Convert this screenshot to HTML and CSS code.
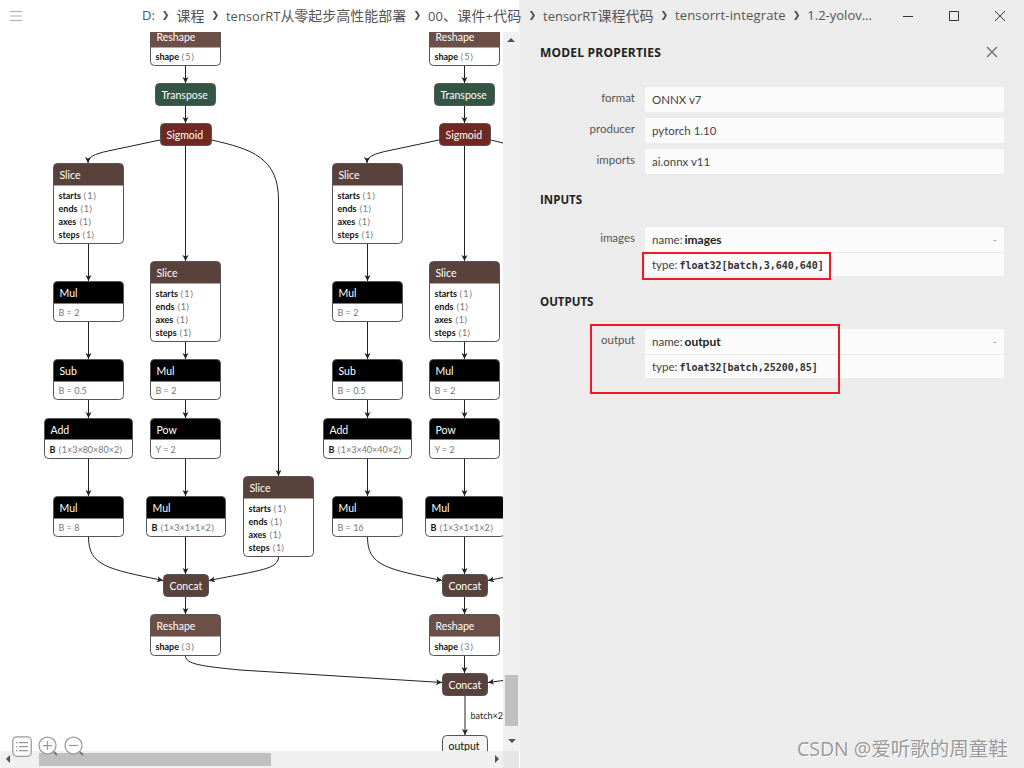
FILE: index.html
```html
<!DOCTYPE html>
<html lang="zh-CN">
<head>
    <meta charset="UTF-8">
    <meta name="viewport" content="width=device-width, initial-scale=1.0">
    <title>Netron - model properties</title>
    <link rel="stylesheet" href="styles.css">
</head>
<body>
    <header class="titlebar">
        <svg class="menu-icon" width="14" height="12" viewBox="0 0 14 12"><path d="M1 1.5h12M1 6h12M1 10.5h12"/></svg>
        <nav class="crumbs">
            <span>D:</span><i>❯</i>
            <span class="cjk">课程</span><i>❯</i>
            <span>tensorRT<span class="cjk">从零起步高性能部署</span></span><i>❯</i>
            <span class="wide">00<span class="cjk">、课件</span>+<span class="cjk">代码</span></span><i>❯</i>
            <span>tensorRT<span class="cjk">课程代码</span></span><i>❯</i>
            <span class="wide">tensorrt-integrate</span><i>❯</i>
            <span>1.2-yolov...</span>
        </nav>
        <div class="win-controls">
            <svg width="12" height="12" viewBox="0 0 12 12"><path d="M1 6.5h10"/></svg>
            <svg width="12" height="12" viewBox="0 0 12 12"><path d="M1.5 1.5h9v9h-9z"/></svg>
            <svg width="12" height="12" viewBox="0 0 12 12"><path d="M1 1l10 10M11 1L1 11"/></svg>
        </div>
    </header>

    <div class="workspace">
        <section class="viewer">
            <div class="viewer-top">
                <div class="canvas">
                    <!-- viewBox starts at y=32 so the numbers below are window coordinates -->
                    <svg class="graph" width="503" height="719" viewBox="0 32 503 719">
                        <defs>
                            <marker id="arrow" markerWidth="7" markerHeight="7" refX="6" refY="3.5" orient="auto" markerUnits="userSpaceOnUse">
                                <path d="M0 0.5L6 3.5L0 6.5L1.5 3.5z" fill="#222"/>
                            </marker>
                            <g id="edges">
                                <path d="M185.5 66V83"/>
                                <path d="M185.5 106V123"/>
                                <path d="M160 140L108 151C94 154 88 157 88 163"/>
                                <path d="M185.5 146V261"/>
                                <path d="M211.5 140C252 149 278.5 158 278.5 200V476"/>
                                <path d="M88.5 244V281"/>
                                <path d="M185.5 342V359"/>
                                <path d="M88.5 322V359"/>
                                <path d="M88.5 400V418"/>
                                <path d="M88.5 459V496"/>
                                <path d="M185.5 400V418"/>
                                <path d="M185.5 459V496"/>
                                <path d="M88.5 537C88.5 566 108 569 163 580.5"/>
                                <path d="M185.5 537V574"/>
                                <path d="M278.5 557C278 569 262 570 209 580.5"/>
                                <path d="M185.5 597V614"/>
                            </g>
                        </defs>

                        <g class="edges">
                            <use href="#edges"/>
                            <use href="#edges" x="279"/>
                            <path d="M185.5 656C186 664 200 666 240 670L442 682.5"/>
                            <path d="M503 680.5L488 682.5"/>
                            <path d="M464.5 656V673"/>
                            <path d="M465 696V735"/>
                        </g>
                        <text class="edge-label" x="470.5" y="719">batch×2</text>

                        <!-- left column -->
                        <g transform="translate(150.5,25.5)">
                            <path class="h-shape" d="M0 22V4a4 4 0 0 1 4-4h62a4 4 0 0 1 4 4v18z"/>
                            <rect class="frame" width="70" height="40" rx="4"/>
                            <text class="op" x="6" y="15">Reshape</text>
                            <text class="attr" x="5" y="34.5"><tspan class="bold">shape</tspan> <tspan class="val">⟨5⟩</tspan></text>
                        </g>
                        <g transform="translate(155.5,83.5)">
                            <rect class="h-layer frame" width="60" height="22" rx="4"/>
                            <text class="op" x="6" y="15.5">Transpose</text>
                        </g>
                        <g transform="translate(160.5,123.5)">
                            <rect class="h-act frame" width="51" height="22" rx="4"/>
                            <text class="op" x="6" y="15.5">Sigmoid</text>
                        </g>
                        <g transform="translate(53.5,163.5)">
                            <path class="h-tensor" d="M0 22V4a4 4 0 0 1 4-4h62a4 4 0 0 1 4 4v18z"/>
                            <rect class="frame" width="70" height="80" rx="4"/>
                            <text class="op" x="6" y="15.5">Slice</text>
                            <text class="attr" x="5" y="35.5"><tspan class="bold">starts</tspan> <tspan class="val">⟨1⟩</tspan></text>
                            <text class="attr" x="5" y="48.5"><tspan class="bold">ends</tspan> <tspan class="val">⟨1⟩</tspan></text>
                            <text class="attr" x="5" y="61.5"><tspan class="bold">axes</tspan> <tspan class="val">⟨1⟩</tspan></text>
                            <text class="attr" x="5" y="74.5"><tspan class="bold">steps</tspan> <tspan class="val">⟨1⟩</tspan></text>
                        </g>
                        <g transform="translate(150.5,261.5)">
                            <path class="h-tensor" d="M0 22V4a4 4 0 0 1 4-4h62a4 4 0 0 1 4 4v18z"/>
                            <rect class="frame" width="70" height="80" rx="4"/>
                            <text class="op" x="6" y="15.5">Slice</text>
                            <text class="attr" x="5" y="35"><tspan class="bold">starts</tspan> <tspan class="val">⟨1⟩</tspan></text>
                            <text class="attr" x="5" y="48"><tspan class="bold">ends</tspan> <tspan class="val">⟨1⟩</tspan></text>
                            <text class="attr" x="5" y="61.5"><tspan class="bold">axes</tspan> <tspan class="val">⟨1⟩</tspan></text>
                            <text class="attr" x="5" y="74.5"><tspan class="bold">steps</tspan> <tspan class="val">⟨1⟩</tspan></text>
                        </g>
                        <g transform="translate(53.5,281.5)">
                            <path class="h-black" d="M0 22V4a4 4 0 0 1 4-4h62a4 4 0 0 1 4 4v18z"/>
                            <rect class="frame" width="70" height="40" rx="4"/>
                            <text class="op" x="6" y="15.5">Mul</text>
                            <text class="attr val" x="5" y="34.5">B = 2</text>
                        </g>
                        <g transform="translate(53.5,359.5)">
                            <path class="h-black" d="M0 22V4a4 4 0 0 1 4-4h62a4 4 0 0 1 4 4v18z"/>
                            <rect class="frame" width="70" height="40" rx="4"/>
                            <text class="op" x="6" y="15.5">Sub</text>
                            <text class="attr val" x="5" y="34.5">B = 0.5</text>
                        </g>
                        <g transform="translate(150.5,359.5)">
                            <path class="h-black" d="M0 22V4a4 4 0 0 1 4-4h62a4 4 0 0 1 4 4v18z"/>
                            <rect class="frame" width="70" height="40" rx="4"/>
                            <text class="op" x="6" y="15.5">Mul</text>
                            <text class="attr val" x="5" y="34.5">B = 2</text>
                        </g>
                        <g transform="translate(44.5,418.5)">
                            <path class="h-black" d="M0 21V4a4 4 0 0 1 4-4h80a4 4 0 0 1 4 4v17z"/>
                            <rect class="frame" width="88" height="40" rx="4"/>
                            <text class="op" x="6" y="15">Add</text>
                            <text class="attr" x="5" y="34"><tspan class="bold">B</tspan> <tspan class="val">⟨1×3×80×80×2⟩</tspan></text>
                        </g>
                        <g transform="translate(150.5,418.5)">
                            <path class="h-black" d="M0 21V4a4 4 0 0 1 4-4h62a4 4 0 0 1 4 4v17z"/>
                            <rect class="frame" width="70" height="40" rx="4"/>
                            <text class="op" x="6" y="15">Pow</text>
                            <text class="attr val" x="5" y="34">Y = 2</text>
                        </g>
                        <g transform="translate(53.5,496.5)">
                            <path class="h-black" d="M0 22V4a4 4 0 0 1 4-4h62a4 4 0 0 1 4 4v18z"/>
                            <rect class="frame" width="70" height="40" rx="4"/>
                            <text class="op" x="6" y="15.5">Mul</text>
                            <text class="attr val" x="5" y="34.5">B = 8</text>
                        </g>
                        <g transform="translate(146.5,496.5)">
                            <path class="h-black" d="M0 22V4a4 4 0 0 1 4-4h71a4 4 0 0 1 4 4v18z"/>
                            <rect class="frame" width="79" height="40" rx="4"/>
                            <text class="op" x="6" y="15.5">Mul</text>
                            <text class="attr" x="5" y="34.5"><tspan class="bold">B</tspan> <tspan class="val">⟨1×3×1×1×2⟩</tspan></text>
                        </g>
                        <g transform="translate(243.5,476.5)">
                            <path class="h-tensor" d="M0 22V4a4 4 0 0 1 4-4h62a4 4 0 0 1 4 4v18z"/>
                            <rect class="frame" width="70" height="80" rx="4"/>
                            <text class="op" x="6" y="15.5">Slice</text>
                            <text class="attr" x="5" y="35.5"><tspan class="bold">starts</tspan> <tspan class="val">⟨1⟩</tspan></text>
                            <text class="attr" x="5" y="48.5"><tspan class="bold">ends</tspan> <tspan class="val">⟨1⟩</tspan></text>
                            <text class="attr" x="5" y="61.5"><tspan class="bold">axes</tspan> <tspan class="val">⟨1⟩</tspan></text>
                            <text class="attr" x="5" y="74.5"><tspan class="bold">steps</tspan> <tspan class="val">⟨1⟩</tspan></text>
                        </g>
                        <g transform="translate(163.5,574.5)">
                            <rect class="h-tensor frame" width="45" height="22" rx="4"/>
                            <text class="op" x="6" y="15.5">Concat</text>
                        </g>
                        <g transform="translate(150.5,614.5)">
                            <path class="h-shape" d="M0 22V4a4 4 0 0 1 4-4h62a4 4 0 0 1 4 4v18z"/>
                            <rect class="frame" width="70" height="41" rx="4"/>
                            <text class="op" x="6" y="15.5">Reshape</text>
                            <text class="attr" x="5" y="35"><tspan class="bold">shape</tspan> <tspan class="val">⟨3⟩</tspan></text>
                        </g>

                        <!-- right column -->
                        <g transform="translate(429.5,25.5)">
                            <path class="h-shape" d="M0 22V4a4 4 0 0 1 4-4h62a4 4 0 0 1 4 4v18z"/>
                            <rect class="frame" width="70" height="40" rx="4"/>
                            <text class="op" x="6" y="15">Reshape</text>
                            <text class="attr" x="5" y="34.5"><tspan class="bold">shape</tspan> <tspan class="val">⟨5⟩</tspan></text>
                        </g>
                        <g transform="translate(434.5,83.5)">
                            <rect class="h-layer frame" width="60" height="22" rx="4"/>
                            <text class="op" x="6" y="15.5">Transpose</text>
                        </g>
                        <g transform="translate(439.5,123.5)">
                            <rect class="h-act frame" width="51" height="22" rx="4"/>
                            <text class="op" x="6" y="15.5">Sigmoid</text>
                        </g>
                        <g transform="translate(332.5,163.5)">
                            <path class="h-tensor" d="M0 22V4a4 4 0 0 1 4-4h62a4 4 0 0 1 4 4v18z"/>
                            <rect class="frame" width="70" height="80" rx="4"/>
                            <text class="op" x="6" y="15.5">Slice</text>
                            <text class="attr" x="5" y="35.5"><tspan class="bold">starts</tspan> <tspan class="val">⟨1⟩</tspan></text>
                            <text class="attr" x="5" y="48.5"><tspan class="bold">ends</tspan> <tspan class="val">⟨1⟩</tspan></text>
                            <text class="attr" x="5" y="61.5"><tspan class="bold">axes</tspan> <tspan class="val">⟨1⟩</tspan></text>
                            <text class="attr" x="5" y="74.5"><tspan class="bold">steps</tspan> <tspan class="val">⟨1⟩</tspan></text>
                        </g>
                        <g transform="translate(429.5,261.5)">
                            <path class="h-tensor" d="M0 22V4a4 4 0 0 1 4-4h62a4 4 0 0 1 4 4v18z"/>
                            <rect class="frame" width="70" height="80" rx="4"/>
                            <text class="op" x="6" y="15.5">Slice</text>
                            <text class="attr" x="5" y="35"><tspan class="bold">starts</tspan> <tspan class="val">⟨1⟩</tspan></text>
                            <text class="attr" x="5" y="48"><tspan class="bold">ends</tspan> <tspan class="val">⟨1⟩</tspan></text>
                            <text class="attr" x="5" y="61.5"><tspan class="bold">axes</tspan> <tspan class="val">⟨1⟩</tspan></text>
                            <text class="attr" x="5" y="74.5"><tspan class="bold">steps</tspan> <tspan class="val">⟨1⟩</tspan></text>
                        </g>
                        <g transform="translate(332.5,281.5)">
                            <path class="h-black" d="M0 22V4a4 4 0 0 1 4-4h62a4 4 0 0 1 4 4v18z"/>
                            <rect class="frame" width="70" height="40" rx="4"/>
                            <text class="op" x="6" y="15.5">Mul</text>
                            <text class="attr val" x="5" y="34.5">B = 2</text>
                        </g>
                        <g transform="translate(332.5,359.5)">
                            <path class="h-black" d="M0 22V4a4 4 0 0 1 4-4h62a4 4 0 0 1 4 4v18z"/>
                            <rect class="frame" width="70" height="40" rx="4"/>
                            <text class="op" x="6" y="15.5">Sub</text>
                            <text class="attr val" x="5" y="34.5">B = 0.5</text>
                        </g>
                        <g transform="translate(429.5,359.5)">
                            <path class="h-black" d="M0 22V4a4 4 0 0 1 4-4h62a4 4 0 0 1 4 4v18z"/>
                            <rect class="frame" width="70" height="40" rx="4"/>
                            <text class="op" x="6" y="15.5">Mul</text>
                            <text class="attr val" x="5" y="34.5">B = 2</text>
                        </g>
                        <g transform="translate(323.5,418.5)">
                            <path class="h-black" d="M0 21V4a4 4 0 0 1 4-4h80a4 4 0 0 1 4 4v17z"/>
                            <rect class="frame" width="88" height="40" rx="4"/>
                            <text class="op" x="6" y="15">Add</text>
                            <text class="attr" x="5" y="34"><tspan class="bold">B</tspan> <tspan class="val">⟨1×3×40×40×2⟩</tspan></text>
                        </g>
                        <g transform="translate(429.5,418.5)">
                            <path class="h-black" d="M0 21V4a4 4 0 0 1 4-4h62a4 4 0 0 1 4 4v17z"/>
                            <rect class="frame" width="70" height="40" rx="4"/>
                            <text class="op" x="6" y="15">Pow</text>
                            <text class="attr val" x="5" y="34">Y = 2</text>
                        </g>
                        <g transform="translate(332.5,496.5)">
                            <path class="h-black" d="M0 22V4a4 4 0 0 1 4-4h62a4 4 0 0 1 4 4v18z"/>
                            <rect class="frame" width="70" height="40" rx="4"/>
                            <text class="op" x="6" y="15.5">Mul</text>
                            <text class="attr val" x="5" y="34.5">B = 16</text>
                        </g>
                        <g transform="translate(425.5,496.5)">
                            <path class="h-black" d="M0 22V4a4 4 0 0 1 4-4h71a4 4 0 0 1 4 4v18z"/>
                            <rect class="frame" width="79" height="40" rx="4"/>
                            <text class="op" x="6" y="15.5">Mul</text>
                            <text class="attr" x="5" y="34.5"><tspan class="bold">B</tspan> <tspan class="val">⟨1×3×1×1×2⟩</tspan></text>
                        </g>
                        <g transform="translate(442.5,574.5)">
                            <rect class="h-tensor frame" width="45" height="22" rx="4"/>
                            <text class="op" x="6" y="15.5">Concat</text>
                        </g>
                        <g transform="translate(429.5,614.5)">
                            <path class="h-shape" d="M0 22V4a4 4 0 0 1 4-4h62a4 4 0 0 1 4 4v18z"/>
                            <rect class="frame" width="70" height="41" rx="4"/>
                            <text class="op" x="6" y="15.5">Reshape</text>
                            <text class="attr" x="5" y="35"><tspan class="bold">shape</tspan> <tspan class="val">⟨3⟩</tspan></text>
                        </g>
                        <g transform="translate(442.5,673.5)">
                            <rect class="h-tensor frame" width="45" height="22" rx="4"/>
                            <text class="op" x="6" y="15.5">Concat</text>
                        </g>
                        <g transform="translate(442.5,735.5)">
                            <rect class="h-output frame" width="45" height="22" rx="4"/>
                            <text class="op dark" x="6" y="14.5">output</text>
                        </g>
                    </svg>
                </div>
                <div class="vscroll">
                    <span class="arrow-up"></span>
                    <div class="vthumb"></div>
                    <span class="arrow-down"></span>
                </div>
            </div>
            <div class="viewer-bottom">
                <div class="hscroll">
                    <span class="arrow-left"></span>
                    <div class="hthumb"></div>
                    <span class="arrow-right"></span>
                </div>
                <div class="corner"></div>
            </div>

            <div class="graph-tools">
                <svg width="20" height="21" viewBox="0 0 20 21">
                    <rect x="0.75" y="0.75" width="18.5" height="19.5" rx="4" fill="#fff" fill-opacity=".75"/>
                    <path d="M4 6.5h1.5M7 6.5h9M4 10.5h1.5M7 10.5h9M4 14.5h1.5M7 14.5h9"/>
                </svg>
                <svg width="20" height="21" viewBox="0 0 20 21">
                    <circle cx="9.5" cy="9.5" r="8.5" fill="#fff" fill-opacity=".75"/>
                    <path d="M9.5 5v9M5 9.5h9"/>
                    <path class="handle" d="M16 16l3 3"/>
                </svg>
                <svg width="20" height="21" viewBox="0 0 20 21">
                    <circle cx="9.5" cy="9.5" r="8.5" fill="#fff" fill-opacity=".75"/>
                    <path d="M5 9.5h9"/>
                    <path class="handle" d="M16 16l3 3"/>
                </svg>
            </div>
        </section>

        <aside class="sidebar">
            <div class="sidebar-head">
                <h2 class="sidebar-title">MODEL PROPERTIES</h2>
                <svg class="sidebar-close" width="12" height="12" viewBox="0 0 12 12"><path d="M1 1l10 10M11 1L1 11"/></svg>
            </div>

            <div class="prop">
                <div class="prop-name">format</div>
                <div class="prop-box"><div class="prop-line">ONNX v7</div></div>
            </div>
            <div class="prop">
                <div class="prop-name">producer</div>
                <div class="prop-box"><div class="prop-line">pytorch 1.10</div></div>
            </div>
            <div class="prop">
                <div class="prop-name">imports</div>
                <div class="prop-box"><div class="prop-line">ai.onnx v11</div></div>
            </div>

            <h3 class="section-title">INPUTS</h3>
            <div class="prop">
                <div class="prop-name">images</div>
                <div class="prop-box">
                    <div class="prop-line split">
                        <span>name: <b>images</b></span><span class="dash">-</span>
                    </div>
                    <div class="prop-line">type: <code>float32[batch,3,640,640]</code></div>
                </div>
            </div>

            <h3 class="section-title">OUTPUTS</h3>
            <div class="prop">
                <div class="prop-name">output</div>
                <div class="prop-box">
                    <div class="prop-line split">
                        <span>name: <b>output</b></span><span class="dash">-</span>
                    </div>
                    <div class="prop-line">type: <code>float32[batch,25200,85]</code></div>
                </div>
            </div>

            <div class="mark mark-input"></div>
            <div class="mark mark-output"></div>
        </aside>
    </div>

    <div class="watermark">CSDN @爱听歌的周童鞋</div>
</body>
</html>
```

FILE: styles.css
```css
* {
    margin: 0;
    padding: 0;
    box-sizing: border-box;
}

body {
    position: relative;
    width: 1024px;
    height: 768px;
    overflow: hidden;
    font-family: 'Lato', 'Noto Sans CJK SC', sans-serif;
    background: #fff;
}

/* title bar */
.titlebar {
    display: flex;
    align-items: center;
    height: 32px;
    background: linear-gradient(90deg, #fff 519px, #f0f0f0 519px, #f0f0f0 520px, #ececec 520px);
}

.menu-icon {
    margin-left: 9px;
    flex-shrink: 0;
}

.menu-icon path {
    fill: none;
    stroke: #aaa;
    stroke-width: 1;
}

.crumbs {
    display: flex;
    align-items: center;
    margin-left: 119px;
    width: 744px;
    padding-bottom: 2px;
    font-family: 'Open Sans', 'Noto Sans CJK SC', sans-serif;
    font-size: 13px;
    color: #555;
    white-space: nowrap;
}

.crumbs .cjk {
    font-size: 14px;
}

.crumbs .wide {
    letter-spacing: 0.15px;
}

.crumbs i {
    font-style: normal;
    font-size: 9px;
    font-weight: bold;
    color: #444;
    margin: 0 7px;
    font-family: 'DejaVu Sans', sans-serif;
}

.win-controls {
    display: flex;
    gap: 34px;
    margin-left: 16px;
}

.win-controls path {
    fill: none;
    stroke: #333;
    stroke-width: 1;
}

/* graph viewer */
.workspace {
    display: flex;
    height: 736px;
}

.viewer {
    position: relative;
    display: flex;
    flex-direction: column;
    width: 520px;
}

.viewer-top {
    display: flex;
    height: 719px;
}

.canvas {
    width: 503px;
    overflow: hidden;
}

.graph {
    display: block;
}

.graph text {
    font-family: 'Lato', sans-serif;
}

.edges path, #edges path {
    fill: none;
    stroke: #222;
    stroke-width: 1;
    marker-end: url(#arrow);
}

.frame {
    fill: none;
    stroke: #555;
    stroke-width: 1;
}

.h-black { fill: #000; }
.h-shape { fill: #6c4f47; }
.h-tensor { fill: #59423b; }
.h-layer { fill: #335544; }
.h-act { fill: #702921; }
.h-output { fill: #f4f4f4; }

.op {
    font-size: 10.5px;
    fill: #fff;
}

.op.dark {
    fill: #111;
}

.attr {
    font-size: 9px;
    fill: #111;
}

.bold {
    font-weight: 700;
}

.val {
    fill: #777;
    font-weight: 400;
}

.edge-label {
    font-size: 9px;
    fill: #222;
}

/* scrollbars */
.vscroll {
    position: relative;
    width: 17px;
    background: #f0f0f0;
}

.vthumb {
    position: absolute;
    left: 2px;
    top: 643px;
    width: 13px;
    height: 51px;
    background: #c0c0c0;
}

.viewer-bottom {
    display: flex;
    height: 17px;
}

.hscroll {
    position: relative;
    width: 503px;
    background: #f0f0f0;
}

.hthumb {
    position: absolute;
    left: 39px;
    top: 2px;
    width: 232px;
    height: 13px;
    background: #c0c0c0;
}

.corner {
    width: 16px;
    background: #e6e6e6;
}

.arrow-up, .arrow-down, .arrow-left, .arrow-right {
    position: absolute;
    width: 0;
    height: 0;
    border-style: solid;
    border-color: transparent;
}

.arrow-up {
    left: 4px;
    top: 6px;
    border-width: 0 4px 4px;
    border-bottom-color: #505050;
}

.arrow-down {
    left: 5px;
    bottom: 8px;
    border-width: 4px 4px 0;
    border-top-color: #505050;
}

.arrow-left {
    left: 6px;
    top: 4px;
    border-width: 4px 4px 4px 0;
    border-right-color: #505050;
}

.arrow-right {
    right: 4px;
    top: 4px;
    border-width: 4px 0 4px 4px;
    border-left-color: #505050;
}

.graph-tools {
    position: absolute;
    left: 12px;
    top: 704px;
    display: flex;
    gap: 6px;
}

.graph-tools svg {
    display: block;
}

.graph-tools rect, .graph-tools circle {
    stroke: #999;
    stroke-width: 1.25;
}

.graph-tools path {
    fill: none;
    stroke: #999;
    stroke-width: 1.25;
}

.graph-tools .handle {
    stroke-width: 2;
    stroke: #777;
}

/* properties panel */
.sidebar {
    position: relative;
    flex: 1;
    padding: 8px 20px 0;
    background: #ececec;
}

.sidebar-head {
    display: flex;
    align-items: center;
    justify-content: space-between;
    height: 24px;
    margin-bottom: 23px;
}

.sidebar-title {
    font-family: 'Open Sans', sans-serif;
    font-size: 12px;
    font-weight: 700;
    letter-spacing: 0.2px;
    color: #222;
}

.sidebar-close {
    margin-right: 6px;
}

.sidebar-close path {
    fill: none;
    stroke: #777;
    stroke-width: 1.5;
}

.prop {
    display: grid;
    grid-template-columns: 95px 359px;
    column-gap: 10px;
    margin-bottom: 6px;
}

.prop-name {
    padding-top: 4px;
    font-size: 11.5px;
    color: #555;
    text-align: right;
}

.prop-box {
    background: #fbfbfb;
    border-radius: 2px;
}

.prop-line {
    height: 25px;
    padding: 0 7px;
    font-size: 11.5px;
    line-height: 25px;
    color: #444;
}

.prop-line + .prop-line {
    height: 24px;
    border-top: 1px solid #ececec;
    line-height: 23px;
}

.split {
    display: flex;
    justify-content: space-between;
}

.prop-line b {
    margin-left: -1px;
    font-size: 12px;
    font-weight: 700;
    color: #222;
}

.prop-line code {
    margin-left: -1px;
    font-family: 'DejaVu Sans Mono', monospace;
    font-size: 10px;
    font-weight: 700;
    color: #333;
}

.dash {
    color: #aaa;
}

.section-title {
    height: 16px;
    margin-top: 18px;
    margin-bottom: 19px;
    font-family: 'Open Sans', sans-serif;
    font-size: 11.5px;
    font-weight: 700;
    line-height: 16px;
    color: #222;
}

/* red annotation boxes drawn on top of the panel */
.mark {
    position: absolute;
    border: 2px solid #ed1c24;
}

.mark-input {
    left: 122px;
    top: 220px;
    width: 189px;
    height: 28px;
}

.mark-output {
    left: 70px;
    top: 292px;
    width: 250px;
    height: 70px;
}

.watermark {
    position: absolute;
    left: 797px;
    top: 736px;
    font-family: 'Open Sans', 'Noto Sans CJK SC', sans-serif;
    font-size: 19.5px;
    line-height: 26px;
    color: #9a9a9a;
    text-shadow: 1px 1px 1px #fff;
    white-space: nowrap;
}
```
